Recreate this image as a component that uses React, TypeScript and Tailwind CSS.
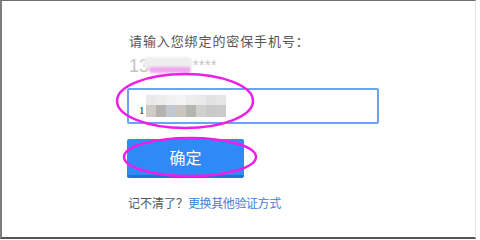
import React from "react";

const topRow = ["#e9e9e9", "#ededed", "#f1f1f1", "#f4f4f4", "#ededed", "#eaeaea", "#e2e2e2", "#e6e6e6"];
const botRow = ["#cfcbc6", "#b6b3af", "#c2c8d2", "#ccc6c1", "#b4b6b2", "#d2cfcf", "#c9c9c9", "#cbcbcb"];

export default function App() {
  return (
    <div
      className="relative w-[480px] h-[240px] bg-white overflow-hidden"
      style={{ fontFamily: '"Noto Sans CJK SC", "Liberation Sans", sans-serif' }}
    >
      <div className="w-[476px] h-[239px] border-l-2 border-t border-b-2 border-r border-l-[#7d7d7d] border-t-[#6f6f6f] border-b-[#555555] border-r-[#e6e6e6]">
        <div className="flex flex-col pl-[125px] pt-[30px]">
          <div className="text-[13px] leading-[20px] text-[#555555] tracking-[0.9px] ml-[2px]">请输入您绑定的密保手机号：</div>
          <div className="flex items-center h-[24px] mt-[3px]">
            <span className="text-[18px] leading-[20px] text-[#c4c4c4] ml-[2px]" style={{ fontFamily: '"Liberation Sans", sans-serif' }}>13</span>
            <div className="relative w-[50px] h-[18px] -ml-[6px]">
              <div className="absolute left-0 top-0 w-[50px] h-[12px] rounded-full bg-[#eeeeee] blur-[1px]" />
              <div className="absolute left-[6px] top-[10px] w-[42px] h-[6px] rounded-full bg-[#f1a6f0] blur-[1px]" />
            </div>
            <span className="text-[14px] leading-[14px] text-[#c2c2c2] -mt-[2px] tracking-[0.5px]" style={{ fontFamily: '"Liberation Sans", sans-serif' }}>****</span>
          </div>
          <div className="mt-[10px] w-[252px] h-[36px] border-2 border-[#6aa3f3] rounded-[2px] flex items-center pl-[10px]">
            <span className="text-[11px] text-[#222222] mt-[8px] mr-[1px]" style={{ fontFamily: '"Liberation Serif", serif' }}>1</span>
            <div className="flex flex-col">
              <div className="flex">
                {topRow.map((c, i) => (
                  <div key={i} className="w-[10px] h-[10px]" style={{ background: c }} />
                ))}
              </div>
              <div className="flex">
                {botRow.map((c, i) => (
                  <div key={i} className="w-[10px] h-[12px]" style={{ background: c }} />
                ))}
              </div>
            </div>
          </div>
          <button className="mt-[15px] w-[117px] h-[39px] bg-[#2f89f6] border-b-[3px] border-[#2a6fcf] rounded-[2px] text-white text-[16px] leading-[20px] flex items-center justify-center">
            确定
          </button>
          <div className="mt-[16px] text-[12px] leading-[18px] ml-[1px] flex items-center">
            <span className="text-[#555555] w-[60px] shrink-0">记不清了？</span>
            <span className="text-[#3f80de] tracking-[-0.4px]">更换其他验证方式</span>
          </div>
        </div>
      </div>
      <svg className="absolute left-0 top-0 pointer-events-none" width="480" height="240">
        <ellipse cx="185" cy="101" rx="68" ry="27" fill="none" stroke="#ee1ee6" strokeWidth="2.5" />
        <ellipse cx="190" cy="157" rx="66" ry="19" fill="none" stroke="#ee1ee6" strokeWidth="2.5" />
      </svg>
    </div>
  );
}
